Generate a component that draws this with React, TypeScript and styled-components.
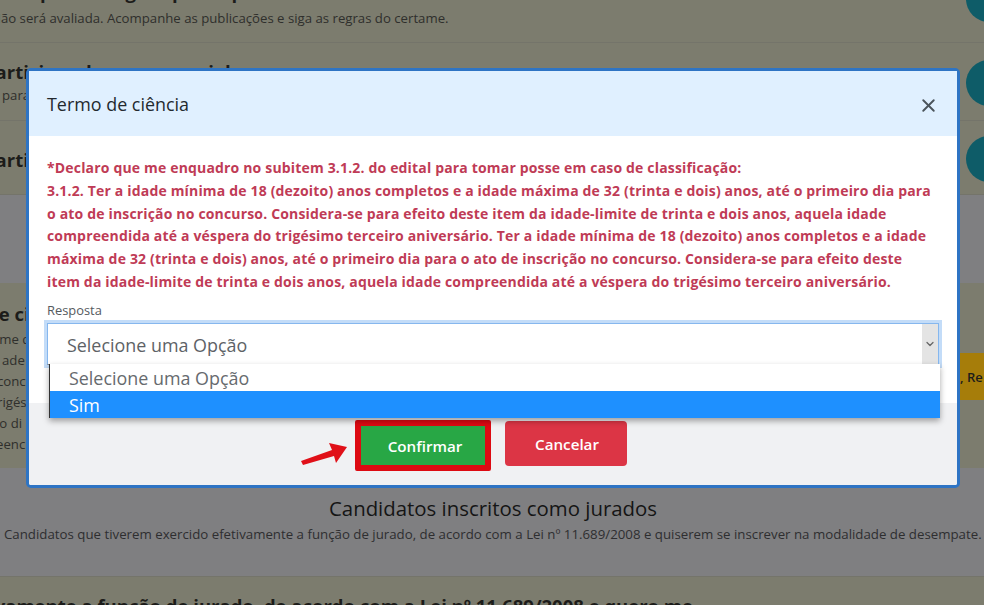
import React from "react";
import styled, { createGlobalStyle } from "styled-components";
import { X, ChevronDown } from "lucide-react";

const Global = createGlobalStyle`
  html, body { margin: 0; padding: 0; background: #7c7c6e; }
  body { font-family: "Open Sans", "Noto Sans", "Liberation Sans", sans-serif; }
  * { box-sizing: border-box; }
`;

const Page = styled.div`
  position: relative;
  width: 984px;
  height: 605px;
  overflow: hidden;
`;

const Band = styled.section<{ $h: number; $tone: "olive" | "gray"; $line?: boolean }>`
  position: relative;
  height: ${(p) => p.$h}px;
  background: ${(p) => (p.$tone === "olive" ? "#7c7c6e" : "#7f7f81")};
  border-bottom: ${(p) => (p.$line ? "1px solid #74746a" : "none")};
  overflow: hidden;
`;

const RowTitle = styled.h3<{ $top: number; $left: number }>`
  margin: ${(p) => p.$top}px 0 0 ${(p) => p.$left}px;
  font-size: 18.5px;
  line-height: 24px;
  font-weight: 700;
  color: #1c1c1a;
  white-space: nowrap;
`;

const RowText = styled.p<{ $left: number; $top?: number }>`
  margin: ${(p) => p.$top ?? 0}px 0 0 ${(p) => p.$left}px;
  font-size: 13.2px;
  line-height: 21px;
  color: #2f2f2c;
  white-space: nowrap;
`;

const Circle = styled.span<{ $y: number }>`
  position: absolute;
  left: 966px;
  top: ${(p) => p.$y}px;
  width: 46px;
  height: 46px;
  border-radius: 50%;
  background: #0e5c68;
`;

const Badge = styled.span`
  position: absolute;
  top: 70px;
  left: 960px;
  width: 24px;
  height: 47px;
  padding-top: 14px;
  background: #a67d0a;
  color: #1c1c1a;
  font-size: 13px;
  font-weight: 600;
  line-height: 20px;
  white-space: nowrap;
  overflow: hidden;
`;

const CenterTitle = styled.h2`
  margin: 27px 0 0 2px;
  text-align: center;
  font-size: 20.4px;
  line-height: 26px;
  font-weight: 500;
  color: #151515;
`;

const CenterText = styled.p`
  margin: 3px 0 0 4px;
  font-size: 13.27px;
  line-height: 20px;
  color: #2e2e30;
  white-space: nowrap;
`;

const Modal = styled.div`
  position: absolute;
  left: 26px;
  top: 68px;
  width: 934px;
  height: 420px;
  display: flex;
  flex-direction: column;
  background: #fff;
  border: 3px solid #2e74c4;
  border-radius: 5px;
`;

const ModalHeader = styled.header`
  height: 65px;
  flex: none;
  display: flex;
  align-items: center;
  justify-content: space-between;
  padding: 0 18px;
  background: #e0f0ff;
`;

const ModalTitle = styled.h1`
  margin: 0;
  font-size: 17.9px;
  font-weight: 500;
  color: #23292e;
`;

const Close = styled.button`
  display: flex;
  margin-top: 3px;
  padding: 0;
  border: 0;
  background: none;
  color: #4b545b;
`;

const ModalBody = styled.div`
  position: relative;
  flex: none;
  height: 267px;
  padding: 21px 18px 0;
`;

const Notice = styled.p`
  margin: 0;
  font-size: 14px;
  letter-spacing: 0.17px;
  line-height: 22.8px;
  font-weight: 700;
  color: #bf3b56;
  white-space: nowrap;
`;

const Label = styled.label`
  display: block;
  margin-top: 8px;
  font-size: 12.9px;
  line-height: 16px;
  color: #555a5e;
`;

const Select = styled.div`
  position: relative;
  margin-top: 5px;
  height: 42px;
  width: 892px;
  padding: 2px 0 0 19px;
  display: flex;
  align-items: center;
  background: #fff;
  border: 1px solid #86b7ee;
  border-bottom-color: #8d8d8d;
  box-shadow: 0 0 0 3px #c3dcf8;
  font-size: 17.9px;
  color: #5d6266;
`;

const Arrow = styled.span`
  position: absolute;
  right: 0;
  top: 0;
  bottom: 0;
  width: 16px;
  display: flex;
  align-items: center;
  justify-content: center;
  background: #e4e4e4;
  color: #666;
`;

const Menu = styled.ul`
  position: absolute;
  left: 20px;
  top: 228px;
  width: 891px;
  margin: 0;
  padding: 0;
  list-style: none;
  background: #fff;
  border-left: 1px solid #333;
  box-shadow: 0 3px 6px rgba(0, 0, 0, 0.35);
  z-index: 2;
`;

const Option = styled.li<{ $active?: boolean }>`
  height: 27px;
  padding: 1px 0 0 19px;
  display: flex;
  align-items: center;
  font-size: 17.9px;
  color: ${(p) => (p.$active ? "#fff" : "#666a6e")};
  background: ${(p) => (p.$active ? "#1e90ff" : "#fff")};
`;

const ModalFooter = styled.footer`
  position: relative;
  flex: 1;
  display: flex;
  justify-content: center;
  align-items: flex-start;
  gap: 14px;
  padding: 18px 4px 0 0;
  background: #f0f1f3;
  border-radius: 0 0 2px 2px;
`;

const Marked = styled.div`
  margin-top: -1px;
  border: 5px solid #dd0a12;
  border-radius: 2px;
  padding: 1px;
  background: #dd0a12;
`;

const Button = styled.button<{ $color: string; $w: number; $h: number; $r: number; $shift: number }>`
  display: block;
  width: ${(p) => p.$w}px;
  height: ${(p) => p.$h}px;
  padding: 0 0 0 ${(p) => p.$shift}px;
  border: 0;
  border-radius: ${(p) => p.$r}px;
  background: ${(p) => p.$color};
  color: #fff;
  font: 600 15.2px "Open Sans", "Noto Sans", sans-serif;
`;

const Pointer = styled.svg`
  position: absolute;
  left: 272px;
  top: 37px;
`;

export default function App() {
  return (
    <Page>
      <Global />
      <Band $h={43} $tone="olive" $line>
        <RowTitle $top={-20} $left={-20}>Participar da vaga especial para índios</RowTitle>
        <RowText $left={-9} $top={4}>Não será avaliada. Acompanhe as publicações e siga as regras do certame.</RowText>
        <Circle $y={-24} />
      </Band>
      <Band $h={78} $tone="olive" $line>
        <RowTitle $top={17} $left={-16}>Participar da vaga especial para negros</RowTitle>
        <RowText $left={2} $top={1}>para</RowText>
        <Circle $y={17} />
      </Band>
      <Band $h={74} $tone="olive" $line>
        <RowTitle $top={27} $left={-16}>Participar</RowTitle>
        <Circle $y={15} />
      </Band>
      <Band $h={88} $tone="gray" />
      <Band $h={185} $tone="olive">
        <RowTitle $top={19} $left={-13}>de ciência</RowTitle>
        <RowText $left={-8} $top={3}>ame de</RowText>
        <RowText $left={2}>ade</RowText>
        <RowText $left={-3}>conc</RowText>
        <RowText $left={-3}>rigés</RowText>
        <RowText $left={-8}>ao di</RowText>
        <RowText $left={-4}>eenc</RowText>
        <Badge>, Re</Badge>
      </Band>
      <Band $h={109} $tone="gray" $line>
        <CenterTitle>Candidatos inscritos como jurados</CenterTitle>
        <CenterText>Candidatos que tiverem exercido efetivamente a função de jurado, de acordo com a Lei nº 11.689/2008 e quiserem se inscrever na modalidade de desempate.</CenterText>
      </Band>
      <Band $h={28} $tone="olive">
        <RowTitle $top={17} $left={-48}>efetivamente a função de jurado, de acordo com a Lei nº 11.689/2008 e quero me</RowTitle>
      </Band>

      <Modal>
        <ModalHeader>
          <ModalTitle>Termo de ciência</ModalTitle>
          <Close aria-label="Fechar"><X size={21} strokeWidth={2.2} /></Close>
        </ModalHeader>
        <ModalBody>
          <Notice>
            *Declaro que me enquadro no subitem 3.1.2. do edital para tomar posse em caso de classificação:<br />
            3.1.2. Ter a idade mínima de 18 (dezoito) anos completos e a idade máxima de 32 (trinta e dois) anos, até o primeiro dia para<br />
            o ato de inscrição no concurso. Considera-se para efeito deste item da idade-limite de trinta e dois anos, aquela idade<br />
            compreendida até a véspera do trigésimo terceiro aniversário. Ter a idade mínima de 18 (dezoito) anos completos e a idade<br />
            máxima de 32 (trinta e dois) anos, até o primeiro dia para o ato de inscrição no concurso. Considera-se para efeito deste<br />
            item da idade-limite de trinta e dois anos, aquela idade compreendida até a véspera do trigésimo terceiro aniversário.
          </Notice>
          <Label>Resposta</Label>
          <Select>
            Selecione uma Opção
            <Arrow><ChevronDown size={12} strokeWidth={2.5} /></Arrow>
          </Select>
          <Menu>
            <Option>Selecione uma Opção</Option>
            <Option $active>Sim</Option>
          </Menu>
        </ModalBody>
        <ModalFooter>
          <Marked><Button $color="#28a745" $w={124} $h={39} $r={0} $shift={4}>Confirmar</Button></Marked>
          <Button $color="#dc3545" $w={122} $h={45} $r={4} $shift={2}>Cancelar</Button>
          <Pointer width="48" height="26" viewBox="0 0 48 26">
            <path d="M0 21 L2 25 L33 16 L35 23 L46 7 L28 3 L31 10 Z" fill="#e01018" />
          </Pointer>
        </ModalFooter>
      </Modal>
    </Page>
  );
}
